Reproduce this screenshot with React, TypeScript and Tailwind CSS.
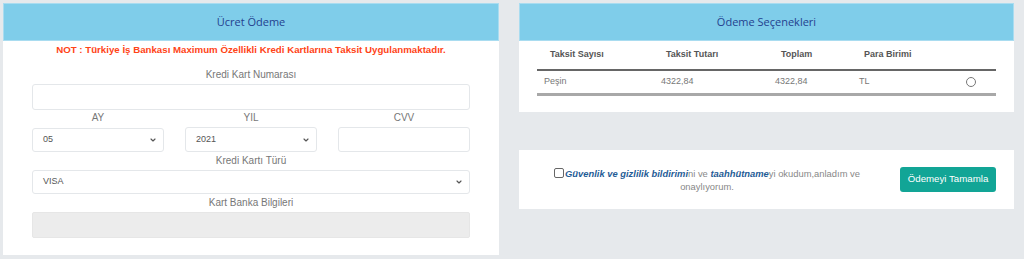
import { ChevronDown } from 'lucide-react'

const label = 'text-center text-[10px] leading-[14px] text-[#777]'
const field = 'w-full rounded-[3px] border border-[#e4e7ea] bg-white'

function Select({ value, className }: { value: string; className?: string }) {
  return (
    <div className={`${field} flex items-center justify-between pl-[10px] pr-[6px] ${className ?? ''}`}>
      <span className="text-[9px] text-[#555]">{value}</span>
      <ChevronDown className="h-[8px] w-[8px] text-[#555]" strokeWidth={3.5} />
    </div>
  )
}

function PanelHeader({ title }: { title: string }) {
  return (
    <div className="flex h-[38px] items-center justify-center border border-[#a9dcf0] bg-[#7fcdea] font-['Open_Sans',sans-serif] text-[11px] text-[#24418f]">
      {title}
    </div>
  )
}

export default function App() {
  return (
    <div className="min-h-[259px] bg-[#e6e9ec] pl-[3px] pt-[3px] font-['Liberation_Sans',Arial,sans-serif]">
      <div className="grid grid-cols-[496px_495px] gap-x-[20px]">
        {/* Ücret Ödeme */}
        <section className="h-[252px] bg-white">
          <PanelHeader title="Ücret Ödeme" />
          <div className="px-[29px] pb-[17px]">
            <p className="text-center text-[9.7px] font-bold leading-[17px] text-[#ff4417]">
              NOT : Türkiye İş Bankası Maximum Özellikli Kredi Kartlarına Taksit Uygulanmaktadır.
            </p>
            <div className={`${label} mt-[10px]`}>Kredi Kart Numarası</div>
            <div className={`${field} mt-[2px] h-[26px]`} />
            <div className="grid grid-cols-3 gap-x-[21px]">
              <div>
                <div className={`${label} pt-[1px] pb-[2px]`}>AY</div>
                <Select value="05" className="mt-[1px] h-[24px]" />
              </div>
              <div>
                <div className={`${label} pt-[1px] pb-[2px]`}>YIL</div>
                <Select value="2021" className="h-[25px]" />
              </div>
              <div>
                <div className={`${label} pt-[1px] pb-[2px]`}>CVV</div>
                <div className={`${field} h-[25px]`} />
              </div>
            </div>
            <div className={`${label} pt-[2px] pb-[2px]`}>Kredi Kartı Türü</div>
            <Select value="VISA" className="h-[24px]" />
            <div className={`${label} pt-[2px] pb-[2px]`}>Kart Banka Bilgileri</div>
            <div className="h-[26px] w-full rounded-[2px] border border-[#e6e6e6] bg-[#ececec]" />
          </div>
        </section>

        <div className="flex flex-col">
          {/* Ödeme Seçenekleri */}
          <section className="h-[109px] bg-white">
            <PanelHeader title="Ödeme Seçenekleri" />
            <div className="px-[18px]">
              <div className="grid h-[30px] grid-cols-[117px_114px_84px_102px_1fr] items-center border-b-2 border-[#666] text-[9px] font-bold text-[#555]">
                <div className="pl-[13px]">Taksit Sayısı</div>
                <div className="pl-[12px]">Taksit Tutarı</div>
                <div className="pl-[13px]">Toplam</div>
                <div className="pl-[12px]">Para Birimi</div>
                <div />
              </div>
              <div className="grid h-[25px] grid-cols-[117px_114px_84px_102px_1fr] items-center border-b-[3px] border-[#a8a8a8] text-[9px] text-[#777]">
                <div className="pl-[7px]">Peşin</div>
                <div className="pl-[7px]">4322,84</div>
                <div className="pl-[7px]">4322,84</div>
                <div className="pl-[7px]">TL</div>
                <div className="pl-[12px]">
                  <span className="block h-[10px] w-[10px] rounded-full border border-[#777] bg-white" />
                </div>
              </div>
            </div>
          </section>

          {/* Onay */}
          <section className="mt-[38px] flex h-[59px] items-center bg-white px-[18px]">
            <div className="w-[340px] text-center text-[9.4px] leading-[13px] text-[#888]">
              <span className="mr-[1px] inline-block h-[10px] w-[10px] translate-y-[1px] rounded-[2px] border border-[#666] bg-white align-baseline" />
              <b className="italic text-[#1f5c96]">Güvenlik ve gizlilik bildirimi</b>ni ve{' '}
              <b className="italic text-[#1f5c96]">taahhütname</b>yi okudum,anladım ve onaylıyorum.
            </div>
            <div className="flex flex-1 justify-end">
              <button className="h-[25px] w-[96px] rounded-[3px] bg-[#12a596] text-[9.7px] text-white">
                Ödemeyi Tamamla
              </button>
            </div>
          </section>
        </div>
      </div>
    </div>
  )
}
